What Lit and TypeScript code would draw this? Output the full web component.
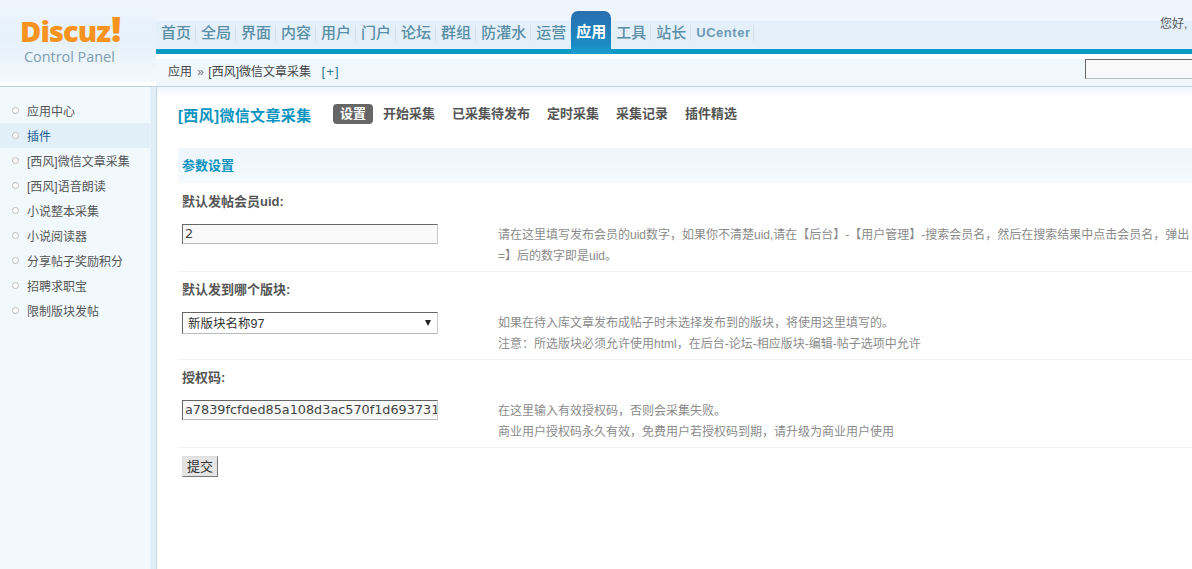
import { LitElement, html, css } from "lit";
import { customElement } from "lit/decorators.js";

const NAV = ["首页","全局","界面","内容","用户","门户","论坛","群组","防灌水","运营","应用","工具","站长","UCenter"];
const SIDE = ["应用中心","插件","[西风]微信文章采集","[西风]语音朗读","小说整本采集","小说阅读器","分享帖子奖励积分","招聘求职宝","限制版块发帖"];
const TABS = ["设置","开始采集","已采集待发布","定时采集","采集记录","插件精选"];

@customElement("app-root")
export class AppRoot extends LitElement {
  static styles = css`
    :host { display: block; width: 1192px; height: 569px; overflow: hidden; background: #fff; color: #444;
      font-family: "Liberation Sans", "Noto Sans CJK SC", sans-serif; font-size: 12px; }
    * { box-sizing: border-box; }
    .top { display: flex; height: 87px; border-bottom: 1px solid #c3d2df; }
    .logo { flex: 0 0 156px; height: 86px; background: linear-gradient(#eef5fc 0, #e6f1fa 40px, #f2f8fd 81px, #fff 82px);
      padding: 13px 0 0 20px; }
    .brand { font-family: "Open Sans", sans-serif; font-weight: 800; font-size: 29px; line-height: 36px; height: 36px; color: #f7931e; letter-spacing: -0.9px; white-space: nowrap; }
    .brand b { font-size: 36px; line-height: 30px; font-weight: 800; color: #f7931e; margin-left: 1px; }
    .cp { font-family: "Open Sans", sans-serif; font-size: 14.4px; line-height: 16px; color: #7f9db0; padding-left: 4px; white-space: nowrap; }
    .right { flex: 1; min-width: 0; overflow: hidden; }
    .navrow { display: flex; height: 54px; border-bottom: 5px solid #0a99c4;
      background: linear-gradient(#eef5fc 0, #eef5fc 21px, #e3f0fa 21px, #e3f0fa 49px); }
    .nav { display: flex; align-items: flex-end; height: 49px; flex: 0 0 1004px; }
    .item { height: 32px; padding: 8px 0 8px 5px; }
    .item span { display: block; height: 16px; line-height: 16px; padding-right: 4px; border-right: 1px solid #d3e1ec;
      font-size: 15px; color: #5a8ea6; font-weight: 500; white-space: nowrap; }
    .item.en span { font-size: 13px; font-weight: 700; letter-spacing: 0.55px; padding-right: 2px; color: #6c9bb5; }
    .item.active { width: 40px; height: 43px; margin-bottom: -5px; padding: 13px 0 0; text-align: center;
      position: relative; border-radius: 7px 7px 0 0; background: linear-gradient(#2a6fae, #1a8cc4 80%, #1b9ed0); }
    .item.active span { border: 0; padding: 0; color: #fff; font-weight: 700; }
    .hello { flex: 0 0 32px; padding-top: 16px; line-height: 16px; color: #555; white-space: nowrap; }
    .crumbbar { display: flex; height: 32px; padding-top: 5px; background: linear-gradient(#fff 0, #fff 5px, #f0f8fd 5px); }
    .crumb { flex: 0 0 929px; padding: 5px 0 0 12px; line-height: 16px; color: #444; white-space: nowrap; }
    .crumb i { font-style: normal; color: #777; margin: 0 1px 0 2px; }
    .crumb a { color: #2a7a9a; margin-left: 7px; letter-spacing: 1.2px; font-size: 13px; }
    .search { flex: 0 0 120px; height: 20px; border: 1px solid; border-color: #666 #ccc #bbb #666; background: #f9f9f9; }
    .body { display: flex; height: 482px; }
    .side { flex: 0 0 157px; height: 100%; padding-top: 11px; border-right: 1px solid #c3d2df;
      background: linear-gradient(90deg, #f2f9fd 150px, #dcebf6 151px, #e4f0f9 156px); }
    .sitem { display: flex; align-items: center; width: 150px; height: 25px; padding-left: 12px; color: #555; white-space: nowrap; }
    .sitem i { width: 7px; height: 7px; border: 1px solid #bbb; border-radius: 50%; background: #fff; margin-right: 8px; }
    .sitem.on { background: #e1eff9; color: #1c5c92; }
    .main { flex: 1; min-width: 0; overflow: hidden; padding: 0 0 0 21px;
      background: linear-gradient(#eef5fb 0, #fff 10px); }
    .head { display: flex; align-items: center; height: 61px; padding-bottom: 7px; white-space: nowrap; }
    .title { flex: 0 0 155px; font-size: 15px; letter-spacing: .35px; font-weight: 700; color: #0a94bf; }
    .tab { font-size: 13px; font-weight: 700; color: #555; margin-right: 17px; line-height: 20px; }
    .tab.on { background: #666; color: #fff; border-radius: 4px; padding: 0 7px; margin-right: 10px; }
    .sec { height: 35px; line-height: 35px; padding-left: 4px; font-size: 13px; font-weight: 700; color: #0a94bf;
      background: linear-gradient(#eef5fc, #f5fafd); margin-bottom: 1px; }
    .label { height: 35px; padding: 10px 0 0 4px; line-height: 16px; font-size: 13px; font-weight: 700; color: #555; white-space: nowrap; }
    .row { display: flex; height: 53px; padding: 5px 0 0 4px; border-bottom: 1px solid #eef1f3; }
    .field { flex: 0 0 256px; height: 20px; border: 1px solid; border-color: #666 #ccc #bbb #666; background: #f9f9f9;
      font: 12.8px/18px "DejaVu Sans", sans-serif; color: #444; padding: 0 0 0 2px; overflow: hidden; white-space: nowrap; }
    .sel { flex: 0 0 256px; height: 22px; border: 1px solid; border-color: #666 #ccc #bbb #666; background: #fff; display: flex;
      justify-content: space-between; align-items: center; padding: 0 6px 1px 5px; font-size: 12.5px; color: #333; }
    .sel b { width: 0; height: 0; border: 3.5px solid transparent; border-top: 6px solid #222; border-bottom: 0; }
    .hint { margin-left: 60px; padding-top: 1px; color: #8b8b8b; line-height: 21px; white-space: nowrap; }
    .btn { display: block; margin: 8px 0 0 4px; width: 36px; height: 21px; border: 1px solid; border-color: #ddd #777 #777 #ddd;
      background: #e4e4e4; font: 13px/18px "Liberation Sans", "Noto Sans CJK SC", sans-serif; color: #333; padding: 0; text-align: center; }
  `;

  render() {
    return html`
      <div class="top">
        <div class="logo">
          <div class="brand">Discuz<b>!</b></div>
          <div class="cp">Control Panel</div>
        </div>
        <div class="right">
          <div class="navrow">
            <div class="nav">
              ${NAV.map(n => html`<div class="item ${n === "应用" ? "active" : ""} ${n === "UCenter" ? "en" : ""}"><span>${n}</span></div>`)}
            </div>
            <div class="hello">您好,</div>
          </div>
          <div class="crumbbar">
            <div class="crumb">应用 <i>»</i> [西风]微信文章采集 <a>[+]</a></div>
            <div class="search"></div>
          </div>
        </div>
      </div>
      <div class="body">
        <div class="side">
          ${SIDE.map(s => html`<div class="sitem ${s === "插件" ? "on" : ""}"><i></i>${s}</div>`)}
        </div>
        <div class="main">
          <div class="head">
            <div class="title">[西风]微信文章采集</div>
            ${TABS.map((t, i) => html`<div class="tab ${i === 0 ? "on" : ""}">${t}</div>`)}
          </div>
          <div class="sec">参数设置</div>

          <div class="label">默认发帖会员uid:</div>
          <div class="row">
            <div class="field">2</div>
            <div class="hint">请在这里填写发布会员的uid数字，如果你不清楚uid,请在【后台】-【用户管理】-搜索会员名，然后在搜索结果中点击会员名，弹出<br />=】后的数字即是uid。</div>
          </div>

          <div class="label">默认发到哪个版块:</div>
          <div class="row">
            <div class="sel">新版块名称97<b></b></div>
            <div class="hint">如果在待入库文章发布成帖子时未选择发布到的版块，将使用这里填写的。<br />注意：所选版块必须允许使用html，在后台-论坛-相应版块-编辑-帖子选项中允许</div>
          </div>

          <div class="label">授权码:</div>
          <div class="row">
            <div class="field">a7839fcfded85a108d3ac570f1d693731f</div>
            <div class="hint">在这里输入有效授权码，否则会采集失败。<br />商业用户授权码永久有效，免费用户若授权码到期，请升级为商业用户使用</div>
          </div>

          <button class="btn">提交</button>
        </div>
      </div>
    `;
  }
}
